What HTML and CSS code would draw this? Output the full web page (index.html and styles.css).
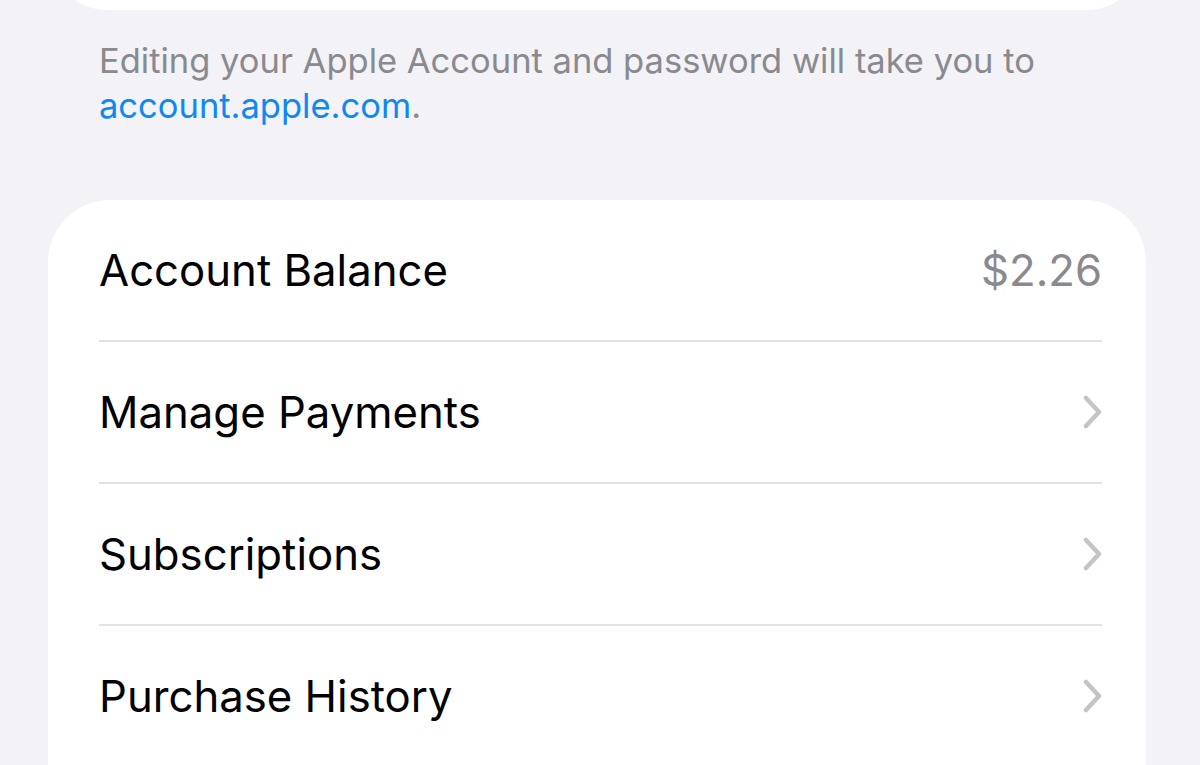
FILE: index.html
```html
<!DOCTYPE html>
<html>
<head>
<meta charset="utf-8">
<link rel="stylesheet" href="styles.css">
</head>
<body>
<div class="top-card"></div>
<p class="footer-note">Editing your Apple Account and password will take you to <a class="link">account.apple.com</a>.</p>
<div class="card">
  <div class="row">
    <span class="label">Account Balance</span>
    <span class="value">$2.26</span>
  </div>
  <div class="row">
    <span class="label">Manage Payments</span>
    <svg class="chev" width="22" height="34" viewBox="0 0 22 34"><path d="M4 3 L17 17 L4 31" fill="none" stroke="#c4c4c7" stroke-width="4.5" stroke-linecap="round" stroke-linejoin="round"/></svg>
  </div>
  <div class="row">
    <span class="label">Subscriptions</span>
    <svg class="chev" width="22" height="34" viewBox="0 0 22 34"><path d="M4 3 L17 17 L4 31" fill="none" stroke="#c4c4c7" stroke-width="4.5" stroke-linecap="round" stroke-linejoin="round"/></svg>
  </div>
  <div class="row">
    <span class="label">Purchase History</span>
    <svg class="chev" width="22" height="34" viewBox="0 0 22 34"><path d="M4 3 L17 17 L4 31" fill="none" stroke="#c4c4c7" stroke-width="4.5" stroke-linecap="round" stroke-linejoin="round"/></svg>
  </div>
</div>
</body>
</html>
```
FILE: styles.css
```css
html, body {
  margin: 0;
  padding: 0;
  background: #f2f2f7;
  font-family: Inter, "Noto Sans", sans-serif;
  overflow: hidden;
}
.top-card {
  margin: -90px 0 0 48px;
  width: 1098px;
  height: 100px;
  background: #fff;
  border-radius: 0 0 60px 60px;
}
.footer-note {
  margin: 28px 0 0 99px;
  width: 1040px;
  font-size: 34.5px;
  line-height: 45px;
  color: #8a8a8e;
}
.link {
  color: #0f88f0;
}
.card {
  margin: 72px 0 0 48px;
  width: 1098px;
  height: 600px;
  background: #fff;
  border-radius: 62px 62px 0 0;
  padding: 0 44px 0 51px;
  box-sizing: border-box;
}
.row {
  height: 140px;
  display: flex;
  align-items: center;
  justify-content: space-between;
  border-bottom: 2px solid #e3e3e6;
}
.row:last-child {
  border-bottom: none;
}
.label {
  font-size: 43.7px;
  color: #000;
}
.value {
  font-size: 43.7px;
  color: #8a8a8e;
}
.chev {
  margin-right: -2px;
}
```
